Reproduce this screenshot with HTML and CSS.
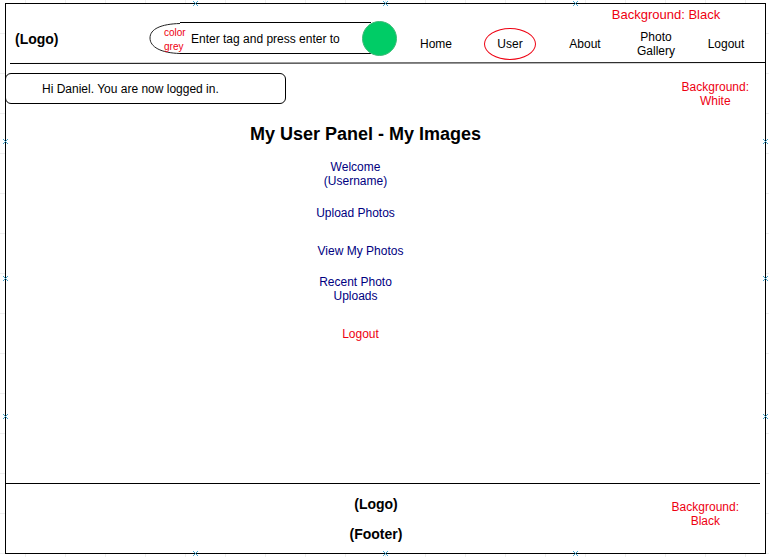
FILE: index.html
```html
<!DOCTYPE html>
<html lang="en">
<head>
<meta charset="utf-8">
<meta name="viewport" content="width=device-width, initial-scale=1">
<title>My User Panel</title>
<link rel="stylesheet" href="styles.css">
</head>
<body>
<svg class="sprite" aria-hidden="true">
  <symbol id="pin" viewBox="0 0 5 5"><path d="M0 0h1v1H0zM1 1h1v1H1zM2 2h1v1H2zM3 3h1v1H3zM4 4h1v1H4zM4 0h1v1H4zM3 1h1v1H3zM1 3h1v1H1zM0 4h1v1H0z" fill="#3fa0c8"/></symbol>
</svg>
<div class="frame">
  <header class="header">
    <div class="logo">(Logo)</div>
    <form class="search">
      <svg class="cap" viewBox="0 0 32 32" aria-hidden="true"><path d="M31 1.5C12 2 1 7 1 16S12 31 31 31.5" fill="none" stroke="#222" stroke-width="1"/></svg>
      <span class="hint">color<br>grey</span>
      <input class="field" type="text" aria-label="Search tags" value="Enter tag and press enter to">
      <button class="go" type="submit" aria-label="Search"></button>
    </form>
    <div class="right">
      <p class="note note-large">Background: Black</p>
      <nav class="nav">
        <a href="#">Home</a>
        <a href="#" class="current"><span>User</span></a>
        <a href="#">About</a>
        <a href="#">Photo<br>Gallery</a>
        <a href="#">Logout</a>
      </nav>
    </div>
  </header>
  <svg class="rule" viewBox="0 0 755 2" preserveAspectRatio="none" aria-hidden="true"><path d="M0 1.5L755 0.5" stroke="#000" stroke-width="1"/></svg>
  <main class="main">
    <div class="top">
      <p class="message">Hi Daniel. You are now logged in.</p>
      <p class="note">Background:<br>White</p>
    </div>
    <h1 class="title">My User Panel - My Images</h1>
    <ul class="menu">
      <li><a href="#">Welcome<br>(Username)</a></li>
      <li><a href="#">Upload Photos</a></li>
      <li class="inset"><a href="#">View My Photos</a></li>
      <li><a href="#">Recent Photo<br>Uploads</a></li>
      <li class="inset"><a href="#" class="leave">Logout</a></li>
    </ul>
  </main>
  <footer class="footer">
    <div class="brand"><p>(Logo)</p><p>(Footer)</p></div>
    <p class="note">Background:<br>Black</p>
  </footer>
  <svg class="pin top-edge q1"><use href="#pin"/></svg>
  <svg class="pin top-edge q2"><use href="#pin"/></svg>
  <svg class="pin top-edge q3"><use href="#pin"/></svg>
  <svg class="pin bottom-edge q1"><use href="#pin"/></svg>
  <svg class="pin bottom-edge q2"><use href="#pin"/></svg>
  <svg class="pin bottom-edge q3"><use href="#pin"/></svg>
  <svg class="pin left-edge r1"><use href="#pin"/></svg>
  <svg class="pin left-edge r2"><use href="#pin"/></svg>
  <svg class="pin left-edge r3"><use href="#pin"/></svg>
  <svg class="pin right-edge r1"><use href="#pin"/></svg>
  <svg class="pin right-edge r2"><use href="#pin"/></svg>
  <svg class="pin right-edge r3"><use href="#pin"/></svg>
</div>
</body>
</html>
```
FILE: styles.css
```css
* { box-sizing: border-box; }

body {
  margin: 0;
  padding: 3px 3px 3px 5px;
  font: 12px/14px "Liberation Sans", Arial, sans-serif;
  color: #000;
  background:
    repeating-linear-gradient(to right, transparent 0 25px, #eee 25px 26px, transparent 26px 40px),
    repeating-linear-gradient(to bottom, transparent 0 33px, #eee 33px 34px, transparent 34px 40px),
    #fff;
}

p, h1, ul { margin: 0; padding: 0; }
a { color: inherit; text-decoration: none; }
.sprite { position: absolute; width: 0; height: 0; }

.frame {
  position: relative;
  display: flex;
  flex-direction: column;
  min-height: calc(100vh - 6px);
  border: 1px solid #000;
  background: #fff;
}

.note { color: #ee0011; text-align: center; }
.note-large { font-size: 13px; line-height: 18px; }

.header { display: flex; height: 58px; }
.logo {
  flex: 0 0 143px;
  padding: 28px 0 0 9px;
  font-size: 14px;
  font-weight: bold;
}

.search {
  position: relative;
  flex: 0 0 248px;
  display: flex;
  align-items: center;
  height: 32px;
  margin-top: 18px;
}
.cap { position: absolute; left: 0; top: 0; width: 32px; height: 32px; }
.hint {
  position: relative;
  width: 31px;
  padding: 4px 0 0 15px;
  font-size: 10px;
  color: #ee0011;
  text-align: center;
}
.field {
  flex: 1;
  min-width: 0;
  height: 32px;
  padding: 2px 0 0 11px;
  border: solid #000;
  border-width: 1px 0;
  background: none;
  font: inherit;
  color: inherit;
}
.go {
  width: 35px;
  height: 35px;
  margin: 1px 0 0 -9px;
  padding: 0;
  border: 1px solid #3dbb78;
  border-radius: 50%;
  background: #00cc66;
}

.right { flex: 1; display: flex; flex-direction: column; padding: 2px 2px 0 2px; }
.right .note { padding-left: 170px; }
.nav {
  flex: 1;
  display: grid;
  grid-template-columns: 74fr 74fr 76fr 66fr 74fr;
  place-items: center;
  padding-top: 2px;
  text-align: center;
}
.current {
  display: grid;
  place-items: center;
  width: 52px;
  height: 32px;
  border: 1px solid #ee0011;
  border-radius: 50%;
}

.rule { flex: none; width: calc(100% - 4px); height: 2px; margin-left: 4px; }

.main { flex: 1; }
.top { display: flex; justify-content: space-between; padding: 9px 16px 0 0; }
.message {
  width: 281px;
  height: 31px;
  margin-left: -1px;
  padding-left: 36px;
  border: 1px solid #000;
  border-radius: 6px;
  line-height: 30px;
}
.top .note { padding-top: 7px; }

.title {
  margin: 15px 40px 0 0;
  font-size: 18px;
  line-height: 22px;
  text-align: center;
}
.menu {
  display: grid;
  margin: 15px 60px 0 0;
  list-style: none;
  text-align: center;
  color: #00007f;
}
.menu li { margin-bottom: 18px; }
.menu .inset { margin: 6px 0 17px; padding-left: 10px; }
.leave { color: #ee0011; }

.footer {
  display: grid;
  grid-template-columns: 1fr auto 1fr;
  height: 70px;
  padding-right: 19px;
  background: linear-gradient(#000, #000) no-repeat 0 0 / calc(100% - 5px) 1px;
}
.brand {
  grid-column: 2;
  padding-top: 6px;
  font-size: 14px;
  font-weight: bold;
  line-height: 30px;
  text-align: center;
}
.footer .note { justify-self: end; padding: 17px 7px 0 0; }

/* connection points on the frame's outline */
.pin { position: absolute; width: 5px; height: 5px; }
.top-edge { top: -3px; }
.bottom-edge { bottom: -3px; }
.left-edge { left: -3px; }
.right-edge { right: -3px; }
.q1 { left: calc(round(25%, 1px) - 3px); }
.q2 { left: calc(round(50%, 1px) - 3px); }
.q3 { right: calc(round(25%, 1px) - 3px); }
.r1 { top: calc(round(25%, 1px) - 2px); }
.r2 { top: calc(round(50%, 1px) - 3px); }
.r3 { bottom: calc(round(25%, 1px) - 3px); }
```
